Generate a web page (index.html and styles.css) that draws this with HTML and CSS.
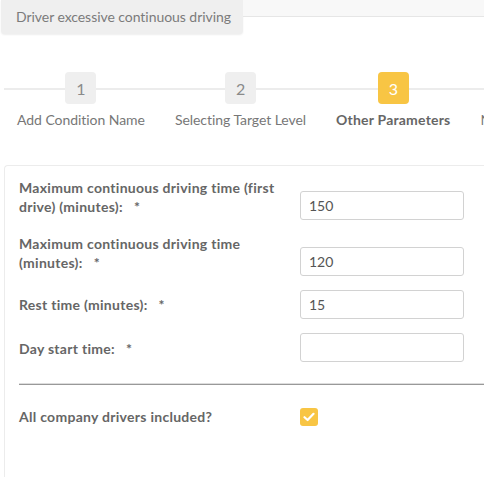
FILE: index.html
```html
<!DOCTYPE html>
<html>
<head>
<meta charset="utf-8">
<link rel="stylesheet" href="styles.css">
</head>
<body>
<div class="topbar">
  <div class="tab">Driver excessive continuous driving</div>
  <div class="topfill"></div>
</div>

<div class="stepper">
  <div class="step"><div class="num">1</div><div class="label">Add Condition Name</div></div>
  <div class="step"><div class="num">2</div><div class="label">Selecting Target Level</div></div>
  <div class="step active"><div class="num">3</div><div class="label">Other Parameters</div></div>
  <div class="step"><div class="num">4</div><div class="label">Notifications</div></div>
</div>

<div class="card">
  <div class="row">
    <div class="flabel">Maximum continuous driving time (first drive) (minutes):&nbsp;&nbsp; *</div>
    <input class="field" type="text" value="150">
  </div>
  <div class="row">
    <div class="flabel">Maximum continuous driving time (minutes):&nbsp;&nbsp; *</div>
    <input class="field" type="text" value="120">
  </div>
  <div class="row">
    <div class="flabel">Rest time (minutes):&nbsp;&nbsp; *</div>
    <input class="field" type="text" value="15">
  </div>
  <div class="row">
    <div class="flabel">Day start time:&nbsp;&nbsp; *</div>
    <input class="field" type="text" value="">
  </div>
  <div class="divider"></div>
  <div class="row check-row">
    <div class="flabel">All company drivers included?</div>
    <span class="checkbox"><svg width="12" height="10" viewBox="0 0 12 10"><path d="M1.5 5.2 L4.6 8 L10.5 1.8" fill="none" stroke="#fff" stroke-width="2.2" stroke-linecap="round" stroke-linejoin="round"/></svg></span>
  </div>
</div>
</body>
</html>
```
FILE: styles.css
```css
html, body {
  margin: 0;
  padding: 0;
  background: #fff;
  font-family: Lato, "Open Sans", sans-serif;
  font-size: 14px;
  overflow: hidden;
}

.topbar {
  display: flex;
  align-items: flex-start;
}

.tab {
  margin-left: 1px;
  height: 34px;
  box-sizing: border-box;
  padding: 8px 12px 0 15px;
  background: #efefef;
  color: #7b7b7b;
  border-radius: 0 0 4px 4px;
  box-shadow: 0 1px 2px rgba(0, 0, 0, 0.07);
  white-space: nowrap;
  line-height: 18px;
  letter-spacing: -0.05px;
}

.topfill {
  flex: 1;
  height: 16px;
  background: #f8f8f8;
  border-bottom: 1px solid #e6e6e6;
}

.stepper {
  position: relative;
  display: flex;
  margin-top: 38px;
  padding-left: 2px;
  white-space: nowrap;
}

.stepper::before {
  content: "";
  position: absolute;
  left: 4px;
  right: 0;
  top: 16px;
  height: 2px;
  background: #ececec;
}

.step {
  position: relative;
  display: flex;
  flex-direction: column;
  align-items: center;
  padding: 0 15px;
  flex: none;
}

.num {
  width: 31px;
  height: 32px;
  border-radius: 4px;
  background: #efefef;
  color: #8a8a8a;
  font-size: 16px;
  line-height: 33px;
  text-align: center;
}

.label {
  margin-top: 7px;
  color: #777;
  line-height: 18px;
  letter-spacing: -0.05px;
}

.step.active .num {
  background: #f8c544;
  color: #fff;
}

.step.active .label {
  font-weight: bold;
  color: #666;
  letter-spacing: 0.2px;
}

.card {
  margin: 36px 0 0 4px;
  border: 1px solid #ececec;
  border-right: none;
  border-radius: 4px 0 0 0;
  padding: 12px 0 60px 14px;
  display: flex;
  flex-direction: column;
  gap: 14px;
}

.row {
  display: flex;
  align-items: flex-end;
}

.flabel {
  width: 281px;
  flex: none;
  font-weight: bold;
  color: #666;
  line-height: 19px;
  padding-bottom: 4px;
  letter-spacing: 0.28px;
}

.row:nth-child(3) .flabel {
  padding-bottom: 5px;
}

.field {
  width: 164px;
  height: 29px;
  box-sizing: border-box;
  border: 1px solid #d2d2d2;
  border-radius: 3px;
  padding: 0 8px;
  font-family: Lato, "Open Sans", sans-serif;
  font-size: 14px;
  color: #555;
  background: #fff;
  margin: 0;
  outline: none;
}

.divider {
  margin-top: 7px;
  height: 1px;
  background: #999;
  border-top: 1px solid #ddd;
  margin-bottom: 8px;
}

.check-row {
  align-items: center;
}

.check-row .flabel {
  padding-bottom: 0;
}

.checkbox {
  width: 18px;
  height: 18px;
  border-radius: 3px;
  background: #f8c544;
  display: flex;
  align-items: center;
  justify-content: center;
}
```
